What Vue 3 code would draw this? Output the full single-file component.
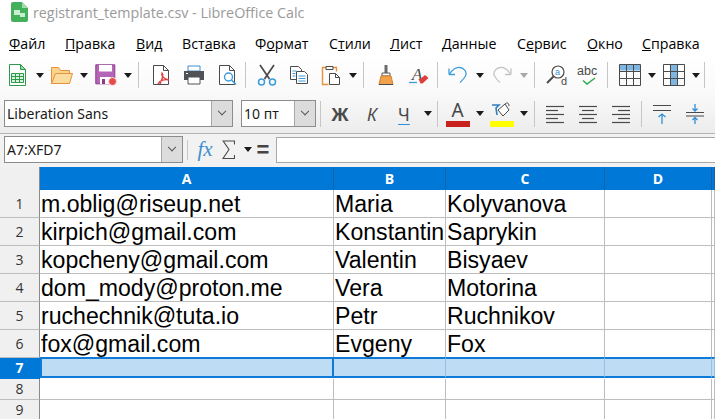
<script setup>
const menu = [
  { pre: '', u: 'Ф', post: 'айл', w: 56 },
  { pre: '', u: 'П', post: 'равка', w: 71 },
  { pre: '', u: 'В', post: 'ид', w: 46 },
  { pre: 'Вст', u: 'а', post: 'вка', w: 73 },
  { pre: 'Ф', u: 'о', post: 'рмат', w: 74 },
  { pre: 'С', u: 'т', post: 'или', w: 61 },
  { pre: '', u: 'Л', post: 'ист', w: 52 },
  { pre: '', u: 'Д', post: 'анные', w: 75 },
  { pre: 'С', u: 'е', post: 'рвис', w: 70 },
  { pre: '', u: 'О', post: 'кно', w: 55 },
  { pre: '', u: 'С', post: 'правка', w: 70 }
]
const cols = ['A', 'B', 'C', 'D', '']
const rows = [
  ['m.oblig@riseup.net', 'Maria', 'Kolyvanova'],
  ['kirpich@gmail.com', 'Konstantin', 'Saprykin'],
  ['kopcheny@gmail.com', 'Valentin', 'Bisyaev'],
  ['dom_mody@proton.me', 'Vera', 'Motorina'],
  ['ruchechnik@tuta.io', 'Petr', 'Ruchnikov'],
  ['fox@gmail.com', 'Evgeny', 'Fox'],
  ['', '', ''],
  ['', '', ''],
  ['', '', '']
]
const alignLines = {
  left: [[0, 18], [0, 12], [0, 18], [0, 12], [0, 18]],
  center: [[0, 18], [3, 12], [0, 18], [3, 12], [0, 18]],
  right: [[0, 18], [6, 12], [0, 18], [6, 12], [0, 18]]
}
</script>

<template>
  <div class="window">
    <header class="title">
      <svg class="app-icon" width="18" height="20" viewBox="0 0 18 20">
        <path d="M1 2a2 2 0 0 1 2-2h9l6 6v12a2 2 0 0 1-2 2H3a2 2 0 0 1-2-2z" fill="#43b05c" />
        <path d="M12 0l6 6h-6z" fill="#a5dcae" />
        <path d="M4 8h6v5H4zM10 11h5v4h-5z" fill="#c9edd0" />
      </svg>
      <span>registrant_template.csv - LibreOffice Calc</span>
    </header>

    <nav class="menu">
      <span v-for="m in menu" :key="m.u + m.post" class="menu-item" :style="{ width: m.w + 'px' }">{{ m.pre }}<u>{{ m.u }}</u>{{ m.post }}</span>
    </nav>

    <div class="toolbar tb-one">
      <span class="btn"><svg width="17" height="22" viewBox="0 0 17 22" fill="none"><path d="M.5.5h11l5 5v16H.5z" fill="#fff" stroke="#2f9a4c" /><path d="M11.500.5v5h5z" fill="#9ad4a8" stroke="#2f9a4c" /><path d="M2.500 9.500h12v9h-12z M2.500 12.500h12 M2.500 15.500h12 M6.500 9.500v9 M10.500 9.500v9" stroke="#2f9a4c" fill="#d8f0dd" /></svg></span>
      <span class="arrow"></span>
      <span class="btn"><svg width="24" height="20" viewBox="0 0 24 20" fill="none"><path d="M1.500 18.500v-16h7l2 3h9v3" fill="#f9d48c" stroke="#e8903a" /><path d="M1.500 18.500l4-10h17l-3 10z" fill="#fbdc9f" stroke="#e8903a" /></svg></span>
      <span class="arrow"></span>
      <span class="btn"><svg width="22" height="22" viewBox="0 0 22 22" fill="none"><path d="M.8.8h19v19H.8z" fill="#b565b5" stroke="#8e3b8e" /><path d="M4 1h13v6.500H4z" fill="#fff" /><path d="M5 13h11v7H5z" fill="#fff" /><path d="M7 15h3v5H7z" fill="#8e3b8e" /><circle cx="17.500" cy="17.500" r="4" fill="#e74c4c" stroke="#fff" stroke-width=".8" /></svg></span>
      <span class="arrow"></span>
      <span class="sep"></span>
      <span class="btn"><svg width="20" height="22" viewBox="0 0 20 22" fill="none"><path d="M2.500 1.500h10l5 5v14h-15z" fill="#fff" stroke="#4a4a4a" /><path d="M12.500 1.500v5h5" stroke="#4a4a4a" /><path d="M9 20c3-6 3-10 2-11-1 2 1 6 7 7-4-1-9 0-11 4" stroke="#e04040" stroke-width="1.400" /></svg></span>
      <span class="btn"><svg width="22" height="20" viewBox="0 0 22 20"><path d="M5 1h12v5H5z" fill="#fff" stroke="#3d8fd1" /><path d="M1 6h20v9H1z" fill="#4f5358" /><path d="M5 12h12v7H5z" fill="#fff" stroke="#4f5358" /><path d="M3 8h2v1H3z" fill="#fff" /></svg></span>
      <span class="btn"><svg width="20" height="22" viewBox="0 0 20 22" fill="none"><path d="M2.500 1.500h10l5 5v14h-15z" fill="#fff" stroke="#4a4a4a" /><path d="M12.500 1.500v5h5" stroke="#4a4a4a" /><circle cx="11.500" cy="13" r="4" fill="#fff" stroke="#3d9bdc" stroke-width="1.400" /><path d="M14.500 16l4.500 4.500" stroke="#3d9bdc" stroke-width="1.600" /></svg></span>
      <span class="sep"></span>
      <span class="btn btn-32"><svg width="20" height="22" viewBox="0 0 20 22" fill="none"><path d="M3 1l9.500 14M17 1L7.500 15" stroke="#4a4a4a" stroke-width="1.700" /><circle cx="4.500" cy="18" r="3" stroke="#3d9bdc" stroke-width="1.500" /><circle cx="15.500" cy="18" r="3" stroke="#3d9bdc" stroke-width="1.500" /></svg></span>
      <span class="btn btn-32"><svg width="20" height="20" viewBox="0 0 20 20" fill="none"><path d="M1.500 1.500h8l3 3v10h-11z" fill="#fff" stroke="#4a4a4a" /><path d="M7.500 6.500h8l3 3v9h-11z" fill="#fff" stroke="#4a4a4a" /><path d="M3.500 6h4M3.500 8.500h3M3.500 11h3M9.500 11h7M9.500 13.500h7M9.500 16h7" stroke="#3d9bdc" /></svg></span>
      <span class="btn btn-32"><svg width="20" height="22" viewBox="0 0 20 22" fill="none"><path d="M5 3.500H1.500v17h6M12 3.500h3.500v4" stroke="#e8903a" stroke-width="1.400" /><path d="M5 2.500h7v3H5z" fill="#fff" stroke="#4a4a4a" /><path d="M8.500 9.500h6l4 4v7h-10z" fill="#fff" stroke="#4a4a4a" /><path d="M14.500 9.500v4h4" stroke="#4a4a4a" /></svg></span>
      <span class="arrow"></span>
      <span class="sep"></span>
      <span class="btn"><svg width="16" height="22" viewBox="0 0 16 22" fill="none"><path d="M6.500 1h3v8h-3z" fill="#6b6b6b" /><path d="M4 9h8v3H4z" fill="#fff" stroke="#5a5a5a" /><path d="M3 12h10l2 8.500H1z" fill="#f2a24a" stroke="#d97f27" /><path d="M1 20.500h14" stroke="#4a4a4a" /></svg></span>
      <span class="btn"><svg width="20" height="20" viewBox="0 0 20 20" fill="none"><text x="3" y="15" font-family="Liberation Serif, serif" font-style="italic" font-size="17" fill="#4a4a4a">A</text><path d="M0 17.500h8" stroke="#3d9bdc" stroke-width="1.300" /><path d="M10 15l6-5 3.500 3-6 5.500h-2z" fill="#e23d3d" /></svg></span>
      <span class="sep sep-near"></span>
      <span class="btn"><svg width="20" height="18" viewBox="0 0 20 18" fill="none"><path d="M1 8.500V2.500M1 8.500h6" stroke="#3d9bdc" stroke-width="1.300" /><path d="M1.500 8C5 3 9 1 12 1.500c4 .5 6.500 4 6 7-.4 2.500-3 5-6 8" stroke="#3d9bdc" stroke-width="1.300" /></svg></span>
      <span class="arrow"></span>
      <span class="btn"><svg width="20" height="18" viewBox="0 0 20 18" fill="none"><path d="M19 8.500V2.500M19 8.500h-6" stroke="#c3c3c3" stroke-width="1.300" /><path d="M18.500 8C15 3 11 1 8 1.500c-4 .5-6.500 4-6 7 .4 2.500 3 5 6 8" stroke="#c3c3c3" stroke-width="1.300" /></svg></span>
      <span class="arrow muted"></span>
      <span class="sep"></span>
      <span class="btn"><svg width="22" height="22" viewBox="0 0 22 22" fill="none"><circle cx="12" cy="8" r="6" fill="#fff" stroke="#4a4a4a" stroke-width="1.200" /><path d="M7.500 12.500L1 19" stroke="#4a4a4a" stroke-width="2" /><text x="9" y="11" font-family="Liberation Sans, sans-serif" font-size="9" fill="#3d8fd1">a</text><text x="15" y="21" font-family="Liberation Sans, sans-serif" font-size="11" fill="#4a4a4a">d</text></svg></span>
      <span class="btn btn-32"><svg width="24" height="22" viewBox="0 0 24 22" fill="none"><text x="0" y="11" font-family="Liberation Sans, sans-serif" font-size="12.500" fill="#4a4a4a">abc</text><path d="M6 16.500l4 3.500 8-6" stroke="#2fa84f" stroke-width="1.500" /></svg></span>
      <span class="sep"></span>
      <span class="btn"><svg width="22" height="22" viewBox="0 0 22 22" fill="none"><path d="M.5 .5h21v6h-21z" fill="#7db6e3" /><path d="M.5 .5h21v21H.5zM.5 7.500h21M.5 14.500h21M7.500 .5v21M14.500 .5v21" stroke="#4a4a4a" /></svg></span>
      <span class="arrow"></span>
      <span class="btn"><svg width="22" height="22" viewBox="0 0 22 22" fill="none"><path d="M7.500 .5h7v21h-7z" fill="#7db6e3" /><path d="M.5 .5h21v21H.5zM.5 7.500h21M.5 14.500h21M7.500 .5v21M14.500 .5v21" stroke="#4a4a4a" /></svg></span>
      <span class="arrow"></span>
      <span class="sep sep-end"></span>
      <span class="btn btn-last"><svg width="22" height="22" viewBox="0 0 22 22" fill="none"><path d="M.5 .5h21v21H.5z" stroke="#4a4a4a" /></svg></span>
    </div>

    <div class="toolbar tb-two">
      <div class="combo font-combo"><span class="combo-text">Liberation Sans</span><span class="combo-btn"><i></i></span></div>
      <div class="combo size-combo"><span class="combo-text">10 пт</span><span class="combo-btn"><i></i></span></div>
      <span class="sep sep-fmt"></span>
      <span class="fmt bold">Ж</span>
      <span class="fmt italic">К</span>
      <span class="fmt under">Ч</span>
      <span class="arrow arrow-fmt"></span>
      <span class="sep sep-near"></span>
      <span class="btn swatch-btn"><span class="font-a">A</span><span class="swatch red"></span></span>
      <span class="arrow"></span>
      <span class="btn swatch-btn"><svg class="fill-icon" width="22" height="16" viewBox="0 0 22 16" fill="none"><path d="M1 3h7l-3 3 1 7" stroke="#2f7fc4" stroke-width="1.600" /><path d="M7 8l7-6 4 6-6 6z" fill="#fff" stroke="#4a4a4a" /><path d="M14 2c2-2 4-1 4 2" stroke="#4a4a4a" /></svg><span class="swatch yellow"></span></span>
      <span class="arrow"></span>
      <span class="sep sep-near"></span>
      <span v-for="(lines, name) in alignLines" :key="name" class="btn">
        <svg width="20" height="20" viewBox="0 0 20 20" fill="none"><path v-for="(l, i) in lines" :key="i" :d="`M${l[0] + 1} ${i * 4 + 2.5}h${l[1]}`" stroke="#4a4a4a" stroke-width="1.200" /></svg>
      </span>
      <span class="sep sep-mid"></span>
      <span class="btn"><svg width="20" height="22" viewBox="0 0 20 22" fill="none"><path d="M1 2.500h18M1 7.500h18" stroke="#4a4a4a" stroke-width="1.200" /><path d="M10 21v-10M6.500 14L10 11l3.500 3" stroke="#2f8fd6" stroke-width="1.300" /></svg></span>
      <span class="btn"><svg width="20" height="22" viewBox="0 0 20 22" fill="none"><path d="M1 9.500h18M1 13h18" stroke="#4a4a4a" stroke-width="1.200" /><path d="M10 1v6.500M7.500 5.500L10 8l2.500-2.500M10 21v-6M7.500 17L10 14.500l2.500 2.500" stroke="#2f8fd6" stroke-width="1.300" /></svg></span>
    </div>

    <div class="toolbar formula">
      <div class="combo name-combo"><span class="combo-text">A7:XFD7</span><span class="combo-btn"><i></i></span></div>
      <span class="sep sep-name"></span>
      <span class="fx">fx</span>
      <svg class="sigma" width="13" height="20" viewBox="0 0 13 20" fill="none"><path d="M12.500 4.500V1H1.200l5.800 8.500L1 18.500h11.500V15" stroke="#4a4a4a" stroke-width="1.100" /></svg>
      <span class="arrow arrow-sum"></span>
      <span class="equals">=</span>
      <div class="formula-input"></div>
    </div>

    <div class="sheet">
      <div class="corner"></div>
      <div v-for="c in cols" :key="c" class="col-head">{{ c }}</div>
      <template v-for="(row, r) in rows" :key="r">
        <div class="row-head" :class="{ 'row-on': r === 6, short: r > 5 }">{{ r + 1 }}</div>
        <div v-for="(v, c) in row" :key="c" class="cell" :class="{ sel: r === 6, first: r === 6 && c === 0, short: r > 5 }">{{ v }}</div>
        <div class="cell" :class="{ sel: r === 6, short: r > 5 }"></div>
        <div class="cell" :class="{ sel: r === 6, short: r > 5 }"></div>
      </template>
    </div>
  </div>
</template>

<style>
body { margin: 0; overflow: hidden; background: #fff; }
</style>

<style scoped>
.window {
  width: 715px;
  height: 419px;
  overflow: hidden;
  background: #f0f0f0;
  font-family: "Open Sans", "Noto Sans", sans-serif;
  color: #000;
}
.title {
  height: 30px;
  box-sizing: border-box;
  padding: 0 0 6px 10px;
  display: flex;
  align-items: center;
  gap: 5px;
  background: #fff;
  color: #9a9a9a;
  font-size: 14.300px;
  white-space: nowrap;
}
.menu {
  height: 26px;
  padding-left: 9px;
  display: flex;
  align-items: center;
  background: #fff;
  font-size: 14.200px;
  white-space: nowrap;
}
.menu-item { flex: none; }
.toolbar { display: flex; align-items: center; white-space: nowrap; overflow: hidden; }
.tb-one {
  height: 38px;
  padding: 0 0 0 1px;
  background: linear-gradient(#fff, #f9f9f9);
}
.tb-two {
  height: 40px;
  box-sizing: border-box;
  padding-left: 4px;
  background: linear-gradient(#f9f9f9, #ececec);
  border-bottom: 1px solid #b4b4b4;
}
.formula {
  height: 33px;
  box-sizing: border-box;
  padding: 2px 0 4px 4px;
  background: #f2f2f2;
}
.btn { flex: none; width: 33px; height: 24px; display: flex; align-items: center; justify-content: center; }
.btn-32 { width: 32px; }
.btn-last { width: 28px; justify-content: flex-end; overflow: visible; }
.arrow { flex: none; width: 11px; position: relative; height: 5px; }
.arrow::after {
  content: "";
  position: absolute;
  left: 2px;
  top: 0;
  border: 4px solid transparent;
  border-top: 5px solid #1b1b1b;
  border-bottom: 0;
}
.arrow.muted::after { border-top-color: #a8a8a8; }
.sep { flex: none; width: 1px; height: 26px; margin: 0 5px; background: #c6c6c6; }
.btn + .sep { margin-left: 2px; }
.toolbar .sep-near { margin-right: 3px; }
.toolbar .sep-end { margin-left: 3px; }
.toolbar .sep-fmt { margin: 0 3px 0 4px; }
.toolbar .sep-mid { margin: 0 3px 0 4px; }
.toolbar .sep-name { margin: 0 0 0 4px; height: 20px; }
.combo {
  flex: none;
  height: 27px;
  box-sizing: border-box;
  display: flex;
  align-items: center;
  background: #fff;
  border: 1px solid #8c8c8c;
  font-family: "Noto Sans", "Open Sans", sans-serif;
  font-size: 14px;
  color: #1a1a1a;
}
.font-combo { width: 229px; margin-right: 8px; }
.size-combo { width: 75px; }
.name-combo { width: 179px; }
.combo-text { flex: 1; padding-left: 2px; min-width: 0; }
.combo-btn {
  flex: none;
  width: 21px;
  height: 100%;
  background: #dcdcdc;
  border-left: 1px solid #a8a8a8;
  box-sizing: border-box;
  display: flex;
  align-items: center;
  justify-content: center;
}
.combo-btn i {
  width: 5px;
  height: 5px;
  border-right: 1px solid #555;
  border-bottom: 1px solid #555;
  transform: rotate(45deg) translate(-2px, -2px);
}
.fmt {
  flex: none;
  width: 32px;
  text-align: center;
  color: #4a4a4a;
  font-family: "Noto Sans", sans-serif;
  font-size: 17.500px;
  line-height: 24px;
}
.bold { font-weight: 700; }
.italic { font-style: italic; }
.under { text-decoration: underline; text-decoration-color: #2f8fd6; text-underline-offset: 3px; text-decoration-thickness: 1px; }
.arrow-fmt { margin-left: 2px; margin-right: -1px; }
.swatch-btn { flex-direction: column; gap: 0; height: 30px; }
.font-a { color: #444; font-family: "Noto Sans", sans-serif; font-size: 19px; line-height: 21px; }
.fill-icon { margin-bottom: 3px; margin-top: 2px; }
.swatch { width: 24px; height: 6px; flex: none; }
.red { background: #c9211e; }
.yellow { background: #ffff00; }
.fx {
  flex: none;
  width: 34px;
  text-align: center;
  color: #3d8fd1;
  font-family: "Liberation Serif", serif;
  font-style: italic;
  font-size: 21px;
}
.sigma { flex: none; margin-left: 0; }
.arrow-sum { margin-left: 7px; }
.equals {
  flex: none;
  width: 20px;
  text-align: center;
  font-family: "Liberation Sans", sans-serif;
  font-size: 22px;
  font-weight: 700;
  color: #444;
}
.formula-input {
  flex: 1;
  align-self: flex-end;
  margin-left: 3px;
  height: 26px;
  box-sizing: border-box;
  background: #fff;
  border: 1px solid #a8a8a8;
  border-right: 0;
}
.sheet {
  display: grid;
  grid-template-columns: 40px 294px 112px 159px 107px 3px;
  grid-auto-rows: min-content;
  background: #fff;
  font-family: "Liberation Sans", sans-serif;
}
.corner { height: 23px; background: #f0f0f0; border-right: 1px solid #8a8a8a; box-sizing: border-box; }
.col-head {
  height: 23px;
  box-sizing: border-box;
  background: #0078d7;
  color: #fff;
  border-right: 1px solid #1a60a4;
  text-align: center;
  font-family: "Open Sans", sans-serif;
  font-weight: 700;
  font-size: 14px;
  line-height: 23px;
}
.row-head {
  height: 28px;
  box-sizing: border-box;
  background: #f0f0f0;
  border-right: 1px solid #8a8a8a;
  border-bottom: 1px solid #bdbdbd;
  text-align: center;
  font-family: "Open Sans", sans-serif;
  font-size: 14px;
  color: #333;
  line-height: 27px;
}
.row-head.short { height: 21px; line-height: 20px; }
.row-on { background: #0078d7; color: #fff; font-weight: 700; border-color: #0078d7; }
.cell {
  height: 28px;
  box-sizing: border-box;
  padding-left: 1px;
  border-right: 1px solid #bdbdbd;
  border-bottom: 1px solid #bdbdbd;
  font-size: 23.100px;
  line-height: 28px;
  white-space: nowrap;
  overflow: hidden;
  color: #000;
}
.cell.short { height: 21px; }
.sel { background: #bfdcf5; border-bottom: 2px solid #0f7bd6; border-top: 2px solid #0f7bd6; border-right-color: #9fc0dd; margin-top: -1px; height: 22px; }
.first { border: 2px solid #0f7bd6; }
</style>
